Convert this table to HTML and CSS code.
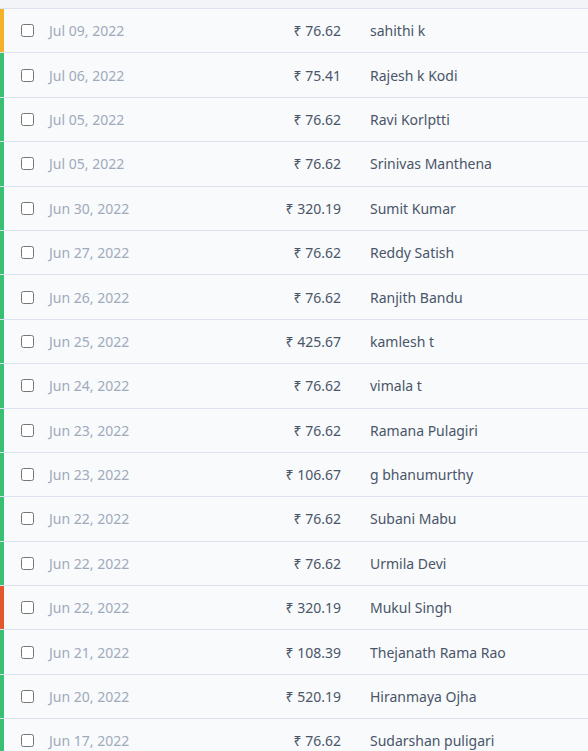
FILE: index.html
```html
<!DOCTYPE html>
<html>
<head>
	<title>Payments</title>
	<link rel="stylesheet" href="styles.css">
</head>
<body>
	<div class="top-strip"></div>
	<ul class="payments">
		<li class="row pending"><input type="checkbox"><span class="date">Jul 09, 2022</span><span class="amount">₹ 76.62</span><span class="name">sahithi k</span></li>
		<li class="row paid"><input type="checkbox"><span class="date">Jul 06, 2022</span><span class="amount">₹ 75.41</span><span class="name">Rajesh k Kodi</span></li>
		<li class="row paid"><input type="checkbox"><span class="date">Jul 05, 2022</span><span class="amount">₹ 76.62</span><span class="name">Ravi Korlptti</span></li>
		<li class="row paid"><input type="checkbox"><span class="date">Jul 05, 2022</span><span class="amount">₹ 76.62</span><span class="name">Srinivas Manthena</span></li>
		<li class="row paid"><input type="checkbox"><span class="date">Jun 30, 2022</span><span class="amount">₹ 320.19</span><span class="name">Sumit Kumar</span></li>
		<li class="row paid"><input type="checkbox"><span class="date">Jun 27, 2022</span><span class="amount">₹ 76.62</span><span class="name">Reddy Satish</span></li>
		<li class="row paid"><input type="checkbox"><span class="date">Jun 26, 2022</span><span class="amount">₹ 76.62</span><span class="name">Ranjith Bandu</span></li>
		<li class="row paid"><input type="checkbox"><span class="date">Jun 25, 2022</span><span class="amount">₹ 425.67</span><span class="name">kamlesh t</span></li>
		<li class="row paid"><input type="checkbox"><span class="date">Jun 24, 2022</span><span class="amount">₹ 76.62</span><span class="name">vimala t</span></li>
		<li class="row paid"><input type="checkbox"><span class="date">Jun 23, 2022</span><span class="amount">₹ 76.62</span><span class="name">Ramana Pulagiri</span></li>
		<li class="row paid"><input type="checkbox"><span class="date">Jun 23, 2022</span><span class="amount">₹ 106.67</span><span class="name">g bhanumurthy</span></li>
		<li class="row paid"><input type="checkbox"><span class="date">Jun 22, 2022</span><span class="amount">₹ 76.62</span><span class="name">Subani Mabu</span></li>
		<li class="row paid"><input type="checkbox"><span class="date">Jun 22, 2022</span><span class="amount">₹ 76.62</span><span class="name">Urmila Devi</span></li>
		<li class="row failed"><input type="checkbox"><span class="date">Jun 22, 2022</span><span class="amount">₹ 320.19</span><span class="name">Mukul Singh</span></li>
		<li class="row paid"><input type="checkbox"><span class="date">Jun 21, 2022</span><span class="amount">₹ 108.39</span><span class="name">Thejanath Rama Rao</span></li>
		<li class="row paid"><input type="checkbox"><span class="date">Jun 20, 2022</span><span class="amount">₹ 520.19</span><span class="name">Hiranmaya Ojha</span></li>
		<li class="row paid"><input type="checkbox"><span class="date">Jun 17, 2022</span><span class="amount">₹ 76.62</span><span class="name">Sudarshan puligari</span></li>
	</ul>
</body>
</html>
```

FILE: styles.css
```css
body {
	margin: 0;
	background-color: #f8fafc;
	font-family: "Noto Sans", "Open Sans", sans-serif;
	font-size: 14px;
}

.top-strip {
	height: 8px;
	background-color: #f3f4f8;
	border-bottom: 1px solid #dde3ee;
}

.payments {
	list-style: none;
	margin: 0;
	padding: 0;
}

.row {
	display: flex;
	align-items: center;
	height: 43.4px;
	padding-left: 21px;
	border-bottom: 1px solid #dde3ee;
	box-shadow: inset 4px 0 0 #38c172;
}

.row.pending {
	box-shadow: inset 4px 0 0 #f5b12a;
}

.row.failed {
	box-shadow: inset 4px 0 0 #e2572c;
}

.row input {
	width: 13px;
	height: 13px;
	margin: 0 15px 0 0;
}

.date {
	width: 120px;
	color: #a0aabb;
}

.amount {
	width: 172px;
	text-align: right;
	color: #4a5568;
}

.name {
	margin-left: 29px;
	color: #4a5568;
}
```
